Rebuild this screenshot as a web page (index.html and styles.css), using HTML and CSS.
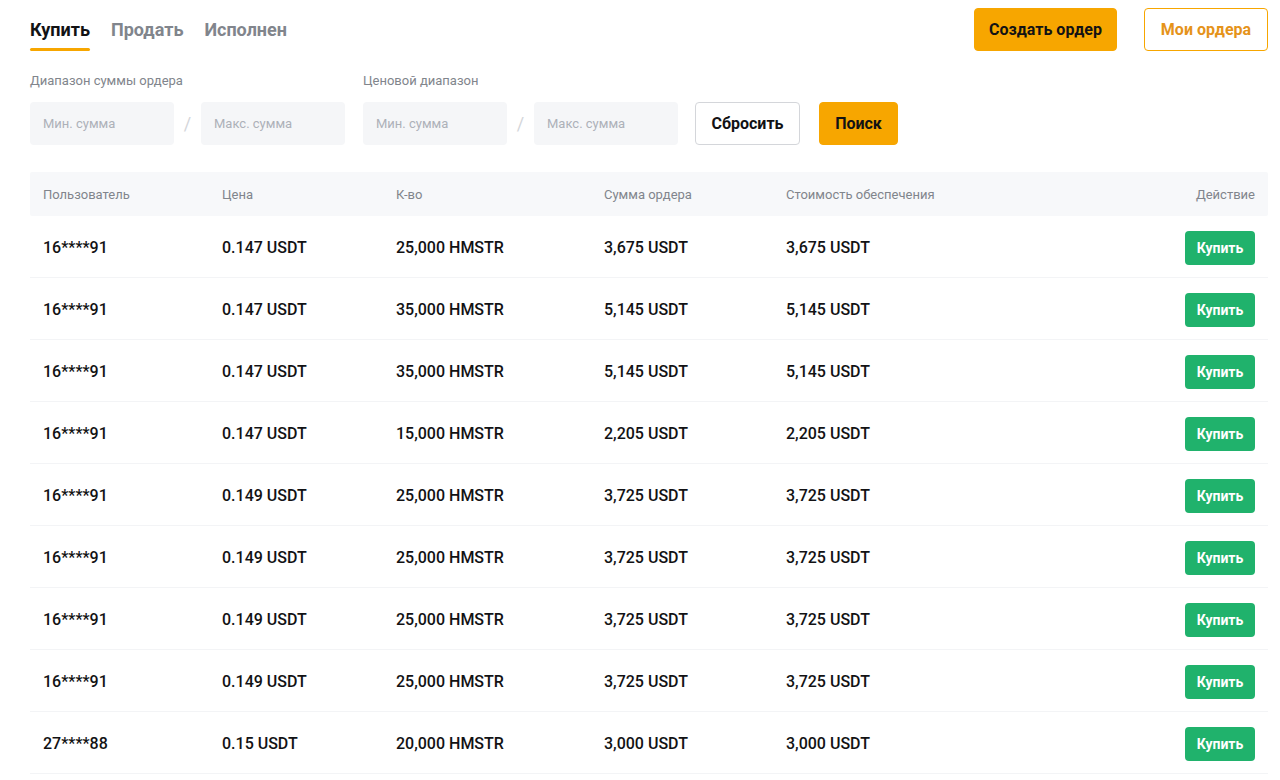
FILE: index.html
```html
<!DOCTYPE html>
<html lang="ru">
<head>
<meta charset="utf-8">
<title>P2P</title>
<link rel="stylesheet" href="styles.css">
</head>
<body>
<div class="page">
  <div class="top">
    <nav class="tabs">
      <span class="tab active">Купить</span>
      <span class="tab">Продать</span>
      <span class="tab">Исполнен</span>
    </nav>
    <div class="top-actions">
      <button class="btn btn-primary btn-create">Создать ордер</button>
      <button class="btn btn-outline">Мои ордера</button>
    </div>
  </div>

  <div class="filters">
    <div class="fgroup">
      <div class="flabel">Диапазон суммы ордера</div>
      <div class="frow">
        <input class="finput" placeholder="Мин. сумма">
        <span class="slash">/</span>
        <input class="finput" placeholder="Макс. сумма">
      </div>
    </div>
    <div class="fgroup">
      <div class="flabel">Ценовой диапазон</div>
      <div class="frow">
        <input class="finput" placeholder="Мин. сумма">
        <span class="slash">/</span>
        <input class="finput" placeholder="Макс. сумма">
      </div>
    </div>
    <div class="fbuttons">
      <button class="btn btn-reset">Сбросить</button>
      <button class="btn btn-primary btn-search">Поиск</button>
    </div>
  </div>

  <div class="table">
    <div class="thead row">
      <div>Пользователь</div><div>Цена</div><div>К-во</div><div>Сумма ордера</div><div>Стоимость обеспечения</div><div class="right">Действие</div>
    </div>
    <div class="row body"><div>16****91</div><div>0.147 USDT</div><div>25,000 HMSTR</div><div>3,675 USDT</div><div>3,675 USDT</div><div class="right"><button class="buy">Купить</button></div></div>
    <div class="row body"><div>16****91</div><div>0.147 USDT</div><div>35,000 HMSTR</div><div>5,145 USDT</div><div>5,145 USDT</div><div class="right"><button class="buy">Купить</button></div></div>
    <div class="row body"><div>16****91</div><div>0.147 USDT</div><div>35,000 HMSTR</div><div>5,145 USDT</div><div>5,145 USDT</div><div class="right"><button class="buy">Купить</button></div></div>
    <div class="row body"><div>16****91</div><div>0.147 USDT</div><div>15,000 HMSTR</div><div>2,205 USDT</div><div>2,205 USDT</div><div class="right"><button class="buy">Купить</button></div></div>
    <div class="row body"><div>16****91</div><div>0.149 USDT</div><div>25,000 HMSTR</div><div>3,725 USDT</div><div>3,725 USDT</div><div class="right"><button class="buy">Купить</button></div></div>
    <div class="row body"><div>16****91</div><div>0.149 USDT</div><div>25,000 HMSTR</div><div>3,725 USDT</div><div>3,725 USDT</div><div class="right"><button class="buy">Купить</button></div></div>
    <div class="row body"><div>16****91</div><div>0.149 USDT</div><div>25,000 HMSTR</div><div>3,725 USDT</div><div>3,725 USDT</div><div class="right"><button class="buy">Купить</button></div></div>
    <div class="row body"><div>16****91</div><div>0.149 USDT</div><div>25,000 HMSTR</div><div>3,725 USDT</div><div>3,725 USDT</div><div class="right"><button class="buy">Купить</button></div></div>
    <div class="row body"><div>27****88</div><div>0.15 USDT</div><div>20,000 HMSTR</div><div>3,000 USDT</div><div>3,000 USDT</div><div class="right"><button class="buy">Купить</button></div></div>
  </div>
</div>
</body>
</html>
```
FILE: styles.css
```css
* { box-sizing: border-box; }
html, body { margin: 0; padding: 0; background: #fff; }
body {
  font-family: Roboto, "Liberation Sans", sans-serif;
  color: #121214;
  overflow: hidden;
}
.page { padding: 8px 12px 0 30px; width: 1280px; }

.top { display: flex; justify-content: space-between; align-items: flex-start; height: 51px; }
.tabs { display: flex; gap: 21px; padding-top: 11px; }
.tab {
  font-size: 18px; font-weight: 700; color: #81858c;
  height: 32px; line-height: 22px; position: relative;
}
.tab.active { color: #121214; }
.tab.active::after {
  content: ""; position: absolute; left: 0; right: 0; bottom: 0;
  height: 3px; border-radius: 2px; background: #f7a600;
}
.top-actions { display: flex; gap: 27px; }

.btn {
  font-family: inherit; font-weight: 700; font-size: 16px;
  height: 43px; border-radius: 4px; cursor: pointer; padding: 0;
}
.btn-primary { background: #f7a600; border: 1px solid #f7a600; color: #121214; }
.btn-create { width: 143px; }
.btn-outline { width: 124px; background: #fff; border: 1px solid #f7a600; color: #e5931a; }

.filters { display: flex; align-items: flex-end; gap: 18px; margin-top: 14px; }
.fgroup { display: flex; flex-direction: column; }
.flabel { font-size: 13px; color: #81858c; line-height: 16px; margin-bottom: 13px; }
.frow { display: flex; align-items: center; }
.finput {
  width: 144px; height: 43px; border: none; border-radius: 4px;
  background: #f5f6f8; padding: 0 13px; font-family: inherit; font-size: 13px;
  outline: none;
}
.finput::placeholder { color: #adb1b8; }
.slash { width: 27px; text-align: center; color: #d4d6da; font-size: 18px; }
.fbuttons { display: flex; gap: 19px; margin-left: -1px; }
.btn-reset { width: 105px; background: #fff; border: 1px solid #d4d6da; color: #121214; }
.btn-search { width: 79px; }

.table { margin-top: 27px; width: 1238px; }
.row {
  display: grid;
  grid-template-columns: 179px 174px 208px 182px 1fr 120px;
  align-items: center; padding: 0 13px;
}
.thead { height: 44px; background: #f7f8fa; font-size: 13px; color: #81858c; border-radius: 2px; }
.body { height: 62px; padding-top: 2px; border-bottom: 1px solid #f3f4f6; font-size: 16px; font-weight: 500; }
.right { text-align: right; }
.buy {
  width: 70px; height: 34px; border: none; border-radius: 4px;
  background: #20b26c; color: #fff; font-family: inherit; font-size: 14px; font-weight: 700;
  cursor: pointer;
}
```
